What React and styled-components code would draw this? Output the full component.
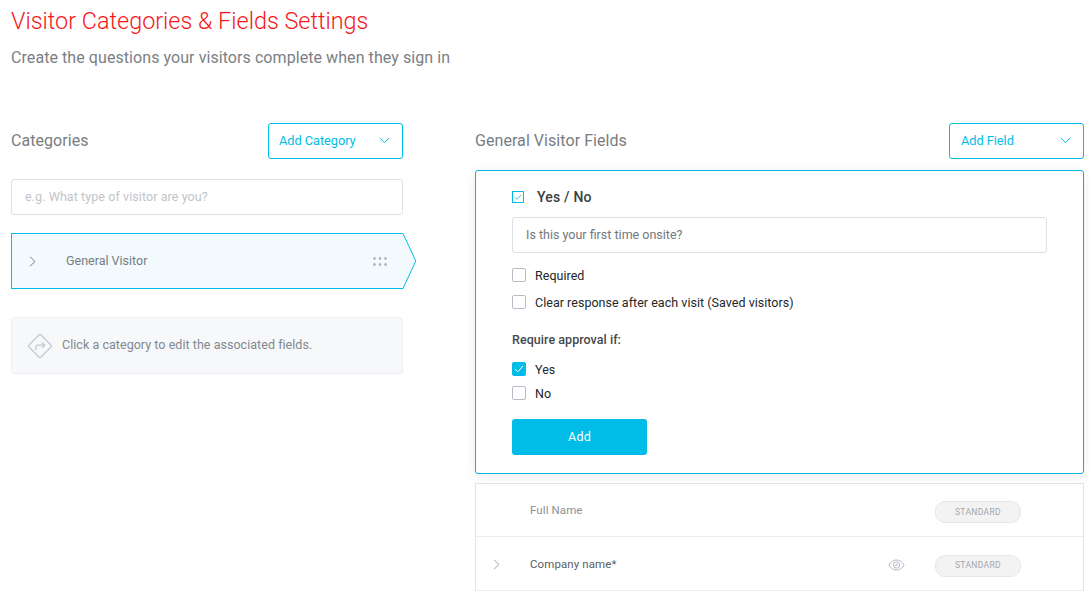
import React from "react";
import styled, { createGlobalStyle } from "styled-components";

const Global = createGlobalStyle`
  html, body { margin: 0; padding: 0; background: #fff; height: 598px; overflow: hidden; }
  body { font-family: Roboto, "Liberation Sans", sans-serif; -webkit-font-smoothing: antialiased; }
  * { box-sizing: border-box; }
`;

const Page = styled.div`
  width: 1089px;
  height: 598px;
  overflow: hidden;
  padding: 6px 5px 0 11px;
`;
const Title = styled.h1`
  margin: 0;
  font-size: 23.4px;
  line-height: 30px;
  font-weight: 300;
  color: #f5161a;
`;
const Subtitle = styled.p`
  margin: 10px 0 0;
  font-size: 16px;
  line-height: 24px;
  font-weight: 400;
  color: #7a8085;
  letter-spacing: 0.07px;
`;
const Columns = styled.div`
  display: grid;
  grid-template-columns: 392px 609px;
  column-gap: 72px;
  margin-top: 53px;
`;
const Column = styled.section`
  display: flex;
  flex-direction: column;
`;
const Header = styled.div`
  display: flex;
  align-items: center;
  justify-content: space-between;
  height: 36px;
`;
const Heading = styled.h2`
  margin: 0 0 2px;
  font-size: 16px;
  font-weight: 400;
  color: #777d82;
  letter-spacing: 0.06px;
`;
const DropButton = styled.button`
  display: flex;
  align-items: center;
  justify-content: space-between;
  width: 135px;
  height: 36px;
  padding: 0 12px 2px ${p => p.$left}px;
  background: #fff;
  border: 1px solid #00bce6;
  border-radius: 3px;
  color: #00bce6;
  font: 400 12.8px Roboto, sans-serif;
  letter-spacing: -0.05px;
`;
const SearchInput = styled.div`
  display: flex;
  align-items: center;
  height: 36px;
  margin-top: 20px;
  padding: 0 0 2px 13px;
  border: 1px solid #dfe0e6;
  border-radius: 3px;
  font-size: 12.5px;
  letter-spacing: 0.08px;
  color: #c0c4ca;
`;
const CategoryRow = styled.div`
  position: relative;
  display: flex;
  align-items: center;
  height: 56px;
  margin-top: 18px;
  padding: 0 16px 0 17px;
  background: #f2fafd;
  border: 1px solid #00bce6;
  border-right: 0;
`;
const CategoryName = styled.span`
  margin: 0 0 2px 30px;
  flex: 1;
  font-size: 12.5px;
  color: #777d82;
`;
const RowTip = styled.svg`
  position: absolute;
  left: 100%;
  top: -1px;
  display: block;
`;
const Hint = styled.div`
  display: flex;
  align-items: center;
  gap: 8px;
  height: 57px;
  margin-top: 28px;
  padding-left: 14px;
  background: #f7f8fa;
  border: 1px solid #eeeff2;
  border-radius: 3px;
  font-size: 12.5px;
  letter-spacing: 0.04px;
  color: #82888e;
`;
const HintText = styled.span`
  padding-bottom: 2px;
`;
const FormPanel = styled.div`
  display: flex;
  flex-direction: column;
  align-items: flex-start;
  height: 304px;
  margin-top: 11px;
  padding: 16px 36px 0;
  background: #fff;
  border: 1px solid #00b5dc;
  border-radius: 3px;
  box-shadow: 0 3px 12px rgba(60, 70, 90, 0.1);
`;
const TypeRow = styled.div`
  display: flex;
  align-items: center;
  gap: 13px;
  height: 20px;
  font-size: 14px;
  font-weight: 500;
  letter-spacing: 0.2px;
  color: #3a3e42;
`;
const QuestionInput = styled.div`
  display: flex;
  align-items: center;
  width: 535px;
  height: 36px;
  margin-top: 10px;
  padding: 0 0 2px 13px;
  border: 1px solid #dfe0e6;
  border-radius: 3px;
  font-size: 12.5px;
  color: #72777d;
`;
const CheckRow = styled.label`
  display: flex;
  align-items: center;
  gap: 9px;
  height: 16px;
  margin-top: ${p => p.$top}px;
  font-size: 12.5px;
  letter-spacing: 0.03px;
  color: #24272a;
`;
const Box = styled.span`
  display: flex;
  align-items: center;
  justify-content: center;
  width: ${p => (p.$outlined ? 12 : 14)}px;
  height: ${p => (p.$outlined ? 12 : 14)}px;
  flex: none;
  border: 1px solid ${p => (p.$on || p.$outlined ? "#00bce6" : "#b5bcc6")};
  border-radius: ${p => (p.$outlined ? 0 : 2)}px;
  background: ${p => (p.$on ? "#00bce6" : "#fff")};
`;
const ApprovalLabel = styled.div`
  margin-top: 22px;
  height: 16px;
  font-size: 12.5px;
  font-weight: 500;
  line-height: 16px;
  letter-spacing: 0.05px;
  color: #45494d;
`;
const AddButton = styled.button`
  width: 135px;
  height: 36px;
  margin-top: 18px;
  padding: 0 0 2px;
  border: 0;
  border-radius: 3px;
  background: #00bce6;
  color: #fff;
  font: 400 12.5px Roboto, sans-serif;
  letter-spacing: 0.2px;
`;
const FieldTable = styled.div`
  margin-top: 9px;
  border: solid #e3e4ea;
  border-width: 0 1px;
`;
const FieldRow = styled.div`
  display: grid;
  grid-template-columns: 54px 1fr 60px 86px 62px;
  align-items: center;
  height: 54px;
  border-bottom: 1px solid #ebecf2;
  &:first-child {
    border-top: 1px solid #e3e4ea;
  }
`;
const ChevronCell = styled.div`
  display: flex;
  justify-content: center;
  margin-top: 2px;
  padding-right: 13px;
`;
const EyeCell = styled.div`
  display: flex;
  justify-content: flex-end;
  margin-top: 2px;
  padding-right: 30px;
`;
const FieldName = styled.span`
  font-size: 11.5px;
  letter-spacing: 0.1px;
  color: ${p => (p.$muted ? "#8a9096" : "#5a5f64")};
`;
const Badge = styled.span`
  display: flex;
  align-items: center;
  justify-content: center;
  height: 22px;
  margin-top: 4px;
  padding-bottom: 1px;
  background: #f3f3f4;
  border: 1px solid #e7e7ea;
  border-radius: 10px;
  font-size: 8.5px;
  letter-spacing: 0.35px;
  color: #a2a5aa;
`;

const Chevron = ({ color = "#7d8389" }) => (
  <svg width="7" height="11" viewBox="0 0 7 11" fill="none">
    <path d="M1 .8 6 5.500 1 10.200" stroke={color} strokeWidth="1" />
  </svg>
);
const Caret = () => (
  <svg width="11" height="7" viewBox="0 0 11 7" fill="none">
    <path d="M.8 1 5.500 5.600 10.200 1" stroke="#00bce6" strokeWidth="1" />
  </svg>
);
const Tick = ({ color, size = 10 }) => (
  <svg width={size} height={size * 0.8} viewBox="0 0 10 8" fill="none">
    <path d="M1 4 3.800 6.800 9 1" stroke={color} strokeWidth="1" />
  </svg>
);
const Dots = () => (
  <svg width="14" height="9" viewBox="0 0 14 9" fill="#a9adb2">
    {[1.5, 7, 12.5].flatMap(x =>
      [1.5, 7.5].map(y => <rect key={`${x}-${y}`} x={x - 1.2} y={y - 1.2} width="2.4" height="2.4" rx=".6" />)
    )}
  </svg>
);
const TurnSign = () => (
  <svg width="28" height="28" viewBox="0 0 28 28" fill="none" stroke="#c4cad2" strokeWidth="1.3">
    <rect x="5.500" y="5.500" width="17" height="17" rx="1.500" transform="rotate(45 14 14)" />
    <path d="M9.800 18v-2.400c0-1.500 1-2.400 2.400-2.400h6.600M16 10.400l2.900 2.800-2.900 2.800" />
  </svg>
);
const Eye = () => (
  <svg width="17" height="12" viewBox="0 0 17 12" fill="none" stroke="#b5bac3" strokeWidth="1">
    <path d="M.8 6C3 2.600 5.600 1 8.500 1s5.500 1.600 7.700 5c-2.200 3.400-4.800 5-7.700 5S3 9.400.8 6Z" />
    <circle cx="8.500" cy="6" r="3.200" />
    <path d="M8.800 4.500v2.200H6.800" />
  </svg>
);

export default function App() {
  return (
    <Page>
      <Global />
      <Title>Visitor Categories &amp; Fields Settings</Title>
      <Subtitle>Create the questions your visitors complete when they sign in</Subtitle>
      <Columns>
        <Column>
          <Header>
            <Heading>Categories</Heading>
            <DropButton $left={10}>Add Category <Caret /></DropButton>
          </Header>
          <SearchInput>e.g. What type of visitor are you?</SearchInput>
          <CategoryRow>
            <Chevron />
            <CategoryName>General Visitor</CategoryName>
            <Dots />
            <RowTip width="14" height="56" viewBox="0 0 14 56" fill="none">
              <path d="M0 .5 12.800 28 0 55.500Z" fill="#f2fafd" />
              <path d="M0 .5 12.800 28 0 55.500" stroke="#00bce6" strokeWidth="1" />
            </RowTip>
          </CategoryRow>
          <Hint><TurnSign /><HintText>Click a category to edit the associated fields.</HintText></Hint>
        </Column>
        <Column>
          <Header>
            <Heading>General Visitor Fields</Heading>
            <DropButton $left={11}>Add Field <Caret /></DropButton>
          </Header>
          <FormPanel>
            <TypeRow>
              <Box $outlined><Tick color="#00bce6" size={8} /></Box>
              Yes / No
            </TypeRow>
            <QuestionInput>Is this your first time onsite?</QuestionInput>
            <CheckRow $top={14}><Box />Required</CheckRow>
            <CheckRow $top={11}><Box />Clear response after each visit (Saved visitors)</CheckRow>
            <ApprovalLabel>Require approval if:</ApprovalLabel>
            <CheckRow $top={13}><Box $on><Tick color="#fff" /></Box>Yes</CheckRow>
            <CheckRow $top={8}><Box />No</CheckRow>
            <AddButton>Add</AddButton>
          </FormPanel>
          <FieldTable>
            <FieldRow>
              <span />
              <FieldName $muted>Full Name</FieldName>
              <span />
              <Badge>STANDARD</Badge>
            </FieldRow>
            <FieldRow>
              <ChevronCell><Chevron color="#a0a5ab" /></ChevronCell>
              <FieldName>Company name*</FieldName>
              <EyeCell><Eye /></EyeCell>
              <Badge>STANDARD</Badge>
            </FieldRow>
          </FieldTable>
        </Column>
      </Columns>
    </Page>
  );
}
